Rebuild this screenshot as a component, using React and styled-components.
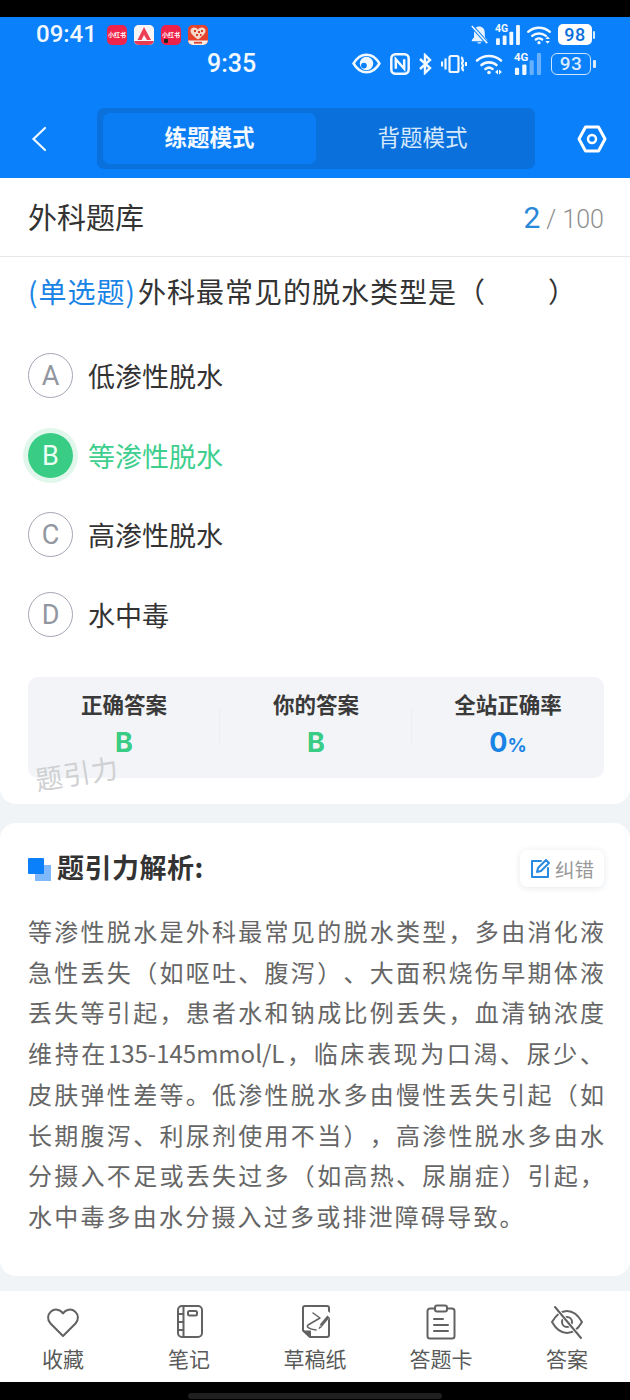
import React from 'react';
import styled, { createGlobalStyle } from 'styled-components';

const CJK = '"Noto Sans CJK SC", "Noto Sans", sans-serif';

const GlobalStyle = createGlobalStyle`
    html, body { margin: 0; padding: 0; background: #000; }
    * { box-sizing: border-box; }
    body { font-family: ${CJK}; text-spacing-trim: space-all; }
`;

const Page = styled.div`
    width: 630px;
    height: 1400px;
    background: #f1f4f7;
    display: flex;
    flex-direction: column;
    overflow: hidden;
`;

const TopBlack = styled.div`
    height: 17px;
    background: #000;
    flex: none;
`;

const Header = styled.header`
    height: 161px;
    background: #0a80fa;
    flex: none;
    padding-top: 3px;
    color: #fff;
`;

const StatusRow = styled.div`
    height: 29px;
    display: flex;
    align-items: center;
    padding-left: ${p => p.$left}px;
    padding-right: ${p => p.$right}px;
`;

const Clock = styled.span`
    font-family: "Roboto", sans-serif;
    font-size: ${p => p.$size}px;
    font-weight: 500;
    color: #f2f8ff;
    line-height: 29px;
`;

const Tiles = styled.div`
    display: flex;
    gap: 7px;
    margin-left: 10px;
`;

const Tile = styled.div`
    width: 20px;
    height: 20px;
    border-radius: 5px;
    background: ${p => p.$bg};
    color: #fff;
    font-size: 6px;
    line-height: 20px;
    text-align: center;
    font-weight: 700;
    overflow: hidden;
    position: relative;
`;

const TileDot = styled.span`
    position: absolute;
    left: 3px;
    bottom: 2px;
    width: 4px;
    height: 4px;
    border-radius: 1px;
    background: #222;
`;

const StatusIcons = styled.div`
    margin-left: auto;
    display: flex;
    align-items: center;
    gap: ${p => p.$gap}px;
`;

const PillBattery = styled.div`
    width: 34px;
    height: 21px;
    border-radius: 5px;
    background: #fff;
    color: #0a6fdc;
    font: 500 18px/21px "Roboto", sans-serif;
    text-align: center;
    letter-spacing: 0.5px;
`;

const OutlineBattery = styled.div`
    width: 40px;
    height: 22px;
    border-radius: 6px;
    border: 1.5px solid #cfe4fd;
    color: #dcecff;
    font: 500 19px/19px "Roboto", sans-serif;
    text-align: center;
    letter-spacing: 0.5px;
`;

const BatteryCap = styled.div`
    width: ${p => p.$w}px;
    height: 8px;
    margin-left: ${p => p.$gap}px;
    border-radius: 1px;
    background: #dcecff;
`;

const Battery = styled.div`
    display: flex;
    align-items: center;
`;

const Nav = styled.nav`
    display: flex;
    align-items: center;
    margin-top: 30px;
    padding: 0 22px 0 31px;
`;

const BackIcon = styled.svg`
    width: 16px;
    height: 26px;
    flex: none;
`;

const Segment = styled.div`
    width: 438px;
    height: 61px;
    margin: 0 42px 0 50px;
    padding: 5px 6px;
    border-radius: 7px;
    background: #0a71dc;
    display: flex;
    flex: none;
`;

const SegmentItem = styled.div`
    flex: 1;
    border-radius: 7px;
    background: ${p => (p.$active ? '#0a7df4' : 'transparent')};
    color: ${p => (p.$active ? '#f4f9ff' : '#d5e8fd')};
    font-size: 22.5px;
    font-weight: ${p => (p.$active ? 700 : 400)};
    padding-bottom: 6px;
    display: flex;
    align-items: center;
    justify-content: center;
`;

const QuestionCard = styled.section`
    height: 626px;
    flex: none;
    background: #fff;
    border-radius: 0 0 16px 16px;
    position: relative;
`;

const TitleRow = styled.div`
    height: 79px;
    border-bottom: 1px solid #e6e8eb;
    padding: 0 26px 0 28px;
    display: flex;
    align-items: center;
    justify-content: space-between;
`;

const BankName = styled.div`
    font-size: 29px;
    color: #333;
    padding-bottom: 2px;
`;

const Progress = styled.div`
    font-family: "Roboto", sans-serif;
    font-size: 25px;
    font-weight: 300;
    color: #8f8f8f;
    display: flex;
    align-items: baseline;
    gap: 6px;
`;

const ProgressNow = styled.span`
    font-size: 30px;
    font-weight: 400;
    color: #2a88d8;
`;

const Question = styled.div`
    padding: 14px 28px 0;
    font-size: 28px;
    letter-spacing: 1px;
    line-height: 40px;
    color: #333;
    white-space: nowrap;
`;

const QuestionType = styled.span`
    color: #1a84e6;
    margin-right: 2px;
`;

const Blank = styled.span`
    display: inline-block;
    width: 62px;
`;

const Options = styled.div`
    margin-top: 25px;
    padding: 0 28px;
    display: flex;
    flex-direction: column;
`;

const OptionRow = styled.div`
    height: 79.5px;
    display: flex;
    align-items: center;
    gap: 15px;
    font-size: 27px;
    color: ${p => (p.$on ? '#3ecf8e' : '#333')};
`;

const OptionMark = styled.div`
    width: 45px;
    height: 45px;
    flex: none;
    border-radius: 50%;
    font: 400 27px/45px "Roboto", sans-serif;
    text-align: center;
    border: ${p => (p.$on ? 'none' : '1.5px solid #a3a7b6')};
    color: ${p => (p.$on ? '#eafff4' : '#92969f')};
    background: ${p => (p.$on ? '#39cc85' : 'transparent')};
    box-shadow: ${p => (p.$on ? '0 0 0 5px #e2f7ec' : 'none')};
    line-height: ${p => (p.$on ? '47px' : '44px')};
`;

const Stats = styled.div`
    margin: 23px 26px 0 28px;
    height: 101px;
    border-radius: 10px;
    background: #f2f4f7;
    display: flex;
    padding-top: 12px;
`;

const Stat = styled.div`
    flex: 1;
    display: flex;
    flex-direction: column;
    align-items: center;
    position: relative;

    &::before {
        content: ${p => (p.$first ? 'none' : '""')};
        position: absolute;
        left: -1px;
        top: 19px;
        height: 36px;
        width: 1px;
        background: #ebedf0;
    }
`;

const StatLabel = styled.div`
    font-size: 21.5px;
    line-height: 30px;
    font-weight: 700;
    color: #3a3a3a;
`;

const StatValue = styled.div`
    margin-top: 10px;
    font: 700 27px/28px "Inter", "Roboto", sans-serif;
    color: ${p => p.$color};
`;

const Percent = styled.span`
    font-size: 19px;
`;

const Watermark = styled.div`
    position: absolute;
    left: 35px;
    top: 578px;
    font-size: 27px;
    line-height: 34px;
    color: #cfd0d2;
    letter-spacing: 1px;
    transform: rotate(-9deg);
`;

const Analysis = styled.section`
    margin-top: 19px;
    height: 453px;
    flex: none;
    background: #fff;
    border-radius: 16px;
    padding: 25px 26px 0 28px;
`;

const AnalysisHead = styled.div`
    height: 40px;
    display: flex;
    align-items: center;
    justify-content: space-between;
`;

const AnalysisTitle = styled.div`
    display: flex;
    align-items: center;
    gap: 6px;
    font-size: 27px;
    letter-spacing: 0.5px;
    font-weight: 700;
    color: #333;
    padding-bottom: 4px;
`;

const TitleMark = styled.svg`
    width: 23px;
    height: 23px;
    margin-top: 6px;
`;

const FixButton = styled.div`
    width: 84px;
    height: 37px;
    border-radius: 7px;
    background: #fff;
    box-shadow: 0 1px 6px rgba(30, 60, 100, 0.12);
    display: flex;
    align-items: center;
    justify-content: center;
    gap: 4px;
    font-size: 19.5px;
    color: #999;
`;

const AnalysisBody = styled.div`
    margin-top: 23px;
    font-size: 24px;
    line-height: 40.7px;
    color: #666;
`;

const AnalysisLine = styled.div`
    white-space: nowrap;
    text-align: justify;
    text-align-last: ${p => (p.$last ? 'left' : 'justify')};
    letter-spacing: ${p => (p.$last ? '2.2px' : '0')};
`;

const BottomBar = styled.footer`
    margin-top: 15px;
    height: 91px;
    flex: none;
    background: #fff;
    display: flex;
`;

const BarItem = styled.div`
    flex: 1;
    display: flex;
    flex-direction: column;
    align-items: center;
    padding-top: 13px;
    font-size: 21px;
    line-height: 30px;
    color: #5a5a5a;
`;

const BarIcon = styled.svg`
    width: 36px;
    height: 36px;
    margin-bottom: 3px;
    fill: none;
    stroke: #626262;
    stroke-width: 2;
    stroke-linecap: round;
    stroke-linejoin: round;
`;

const HomeArea = styled.div`
    flex: 1;
    background: #000;
    display: flex;
    justify-content: center;
    align-items: flex-end;
    padding-bottom: 1px;
`;

const HomePill = styled.div`
    width: 254px;
    height: 6px;
    border-radius: 3px;
    background: #1f1f1f;
`;

const Bell = () => (
    <svg width="19" height="22" viewBox="0 0 21 22" fill="#e9f3ff">
        <path d="M10 1.500c3.800 0 6.300 2.800 6.300 6.500l.2 5.500 2.500 3v1.500H2v-1.500l2.500-3V8c0-3.700 1.800-6.500 5.500-6.500z" />
        <path d="M8 19h4.500c-.3 2-4.200 2-4.500 0z" />
        <path d="M2 1l17 19" stroke="#0a80fa" strokeWidth="4" />
        <path d="M2 1l17 19" stroke="#e9f3ff" strokeWidth="1.800" />
    </svg>
);

const Signal = ({ w, h, on, faded }) => (
    <svg width={w} height={h} viewBox="0 0 26 22" fill="#f2f8ff" overflow="visible">
        <text x="0" y="8.500" fontSize="11" fontWeight="700" fontFamily="Roboto, sans-serif">4G</text>
        <rect x="1" y="15" width="4" height="7" rx="1" />
        <rect x="8" y="12" width="4" height="10" rx="1" />
        <rect x="15" y="8" width="4" height="14" rx="1" fillOpacity={on < 3 ? 0.4 : 1} />
        <rect x="22" y="1" width="4" height="21" rx="1" fillOpacity={faded ? 0.4 : 1} />
    </svg>
);

const Wifi = ({ w, h, arrows }) => (
    <svg width={w} height={h} viewBox="0 0 28 22" fill="none" stroke="#f2f8ff" strokeWidth="2.600" strokeLinecap="round">
        <path d="M2 7.500C9 1.500 19 1.500 26 7.500" />
        <path d="M6.500 12C10.500 8.500 17.500 8.500 21.500 12" />
        <path d="M10.500 16c2-1.500 5-1.500 7 0" />
        <circle cx="14" cy="19.500" r="1.800" fill="#f2f8ff" stroke="none" />
        {arrows === 'v' && <path d="M21 15.500l2.500-3 2.500 3zM21 17.500h5l-2.500 3z" fill="#f2f8ff" stroke="none" />}
        {arrows === 'h' && <path d="M20 19l3-2.500v5zM27 19l-3-2.500v5z" fill="#f2f8ff" stroke="none" />}
    </svg>
);

const Eye = () => (
    <svg width="29" height="21" viewBox="0 0 28 20">
        <path d="M1.500 10C5 4 9 1.500 14 1.500S23 4 26.500 10C23 16 19 18.500 14 18.500S5 16 1.500 10z" fill="none" stroke="#f2f8ff" strokeWidth="2.400" />
        <circle cx="14" cy="10" r="6.500" fill="#f2f8ff" />
        <circle cx="11.500" cy="12" r="2.800" fill="#0a80fa" />
    </svg>
);

const Nfc = () => (
    <svg width="20" height="22" viewBox="0 0 19 21" fill="none" stroke="#f2f8ff" strokeWidth="2.400">
        <rect x="1.200" y="1.200" width="16.600" height="18.600" rx="4" />
        <path d="M5.500 15V6l8 9V6" />
    </svg>
);

const Bluetooth = () => (
    <svg width="14" height="22" viewBox="0 0 14 22" fill="none" stroke="#f2f8ff" strokeWidth="2.400">
        <path d="M2 6l10 9-5 5V2l5 5L2 16" />
    </svg>
);

const Vibrate = () => (
    <svg width="26" height="20" viewBox="0 0 26 20" fill="none" stroke="#f2f8ff" strokeWidth="2.200">
        <rect x="8.500" y="2" width="9" height="16" rx="1.500" />
        <path d="M4.500 4.500v11M1 7.500v5M21.500 3c-1.500 2 1.500 3 0 5s1.500 3 0 5 1.500 2 0 4M25 8v4" />
    </svg>
);

const Chevron = () => (
    <BackIcon viewBox="0 0 16 26" fill="none" stroke="#f2f8ff" strokeWidth="2.200" strokeLinecap="round">
        <path d="M14 2L2.500 13 14 24" />
    </BackIcon>
);

const Hex = () => (
    <svg width="30" height="28" viewBox="0 0 30 28" fill="none" stroke="#fff" strokeWidth="3" strokeLinejoin="round" style={{ flex: 'none' }}>
        <path d="M8.500 2h13L28 14l-6.500 12h-13L2 14z" />
        <circle cx="15" cy="14" r="4" strokeWidth="2.500" />
    </svg>
);

const Pencil = () => (
    <svg width="21" height="21" viewBox="0 0 21 21" fill="none" stroke="#2a8ae0" strokeWidth="2" strokeLinecap="round" strokeLinejoin="round">
        <path d="M11 3H2v16h16v-9" />
        <path d="M8 10l8-8 3 3-8 8-4 1z" />
    </svg>
);

const LogoA = () => (
    <svg width="20" height="20" viewBox="0 0 20 20">
        <rect width="20" height="20" fill="#f7f4f5" />
        <path d="M10 2L3.500 15h4L10 10l3 5h4z" fill="#ee3f55" />
        <rect y="16" width="20" height="4" fill="#e83a52" />
    </svg>
);

const LogoHeart = () => (
    <svg width="20" height="20" viewBox="0 0 20 20">
        <rect width="20" height="20" fill="#e6432e" />
        <path d="M10 14.500C5 11 2.500 8.500 2.500 5.800 2.500 3.800 4 2.500 6 2.500c1.700 0 3.200.8 4 2.200.8-1.400 2.300-2.200 4-2.200 2 0 3.500 1.300 3.500 3.300 0 2.700-2.500 5.200-7.500 8.700z" fill="#f8d8c8" />
        <path d="M6 5h2v2H6zM10 6h2v2h-2zM13 5h2v2h-2zM8 9h2v2H8zM12 9h1.500v2H12z" fill="#d9402c" />
        <rect y="15.500" width="20" height="4.500" fill="#f6ece6" />
        <rect x="6" y="16.800" width="8" height="1.800" fill="#d9402c" />
    </svg>
);

const stats = [
    { label: '正确答案', value: 'B', color: '#39cc85' },
    { label: '你的答案', value: 'B', color: '#39cc85' },
    { label: '全站正确率', value: '0', color: '#1a84e6', percent: true },
];

const options = [
    { mark: 'A', text: '低渗性脱水' },
    { mark: 'B', text: '等渗性脱水', on: true },
    { mark: 'C', text: '高渗性脱水' },
    { mark: 'D', text: '水中毒' },
];

const analysis = [
    '等渗性脱水是外科最常见的脱水类型，多由消化液',
    '急性丢失（如呕吐、腹泻）、大面积烧伤早期体液',
    '丢失等引起，患者水和钠成比例丢失，血清钠浓度',
    '维持在135-145mmol/L，临床表现为口渴、尿少、',
    '皮肤弹性差等。低渗性脱水多由慢性丢失引起（如',
    '长期腹泻、利尿剂使用不当），高渗性脱水多由水',
    '分摄入不足或丢失过多（如高热、尿崩症）引起，',
    '水中毒多由水分摄入过多或排泄障碍导致。',
];

const bar = [
    { label: '收藏', icon: <path d="M18 32L5.500 19.500C2 16 2.500 10.500 6 7.500 9.500 4.500 15 5 18 9.500 21 5 26.500 4.500 30 7.500 33.500 10.500 34 16 30.500 19.500z" /> },
    { label: '笔记', icon: <><rect x="7" y="2" width="24" height="31" rx="4" /><path d="M12.500 2v31M7 10h5.500M7 18h5.500M7 26h5.500" /><rect x="17" y="7" width="9" height="4.500" rx="1.500" /></> },
    { label: '草稿纸', icon: <><path d="M13 33h17a2 2 0 0 0 2-2V4a2 2 0 0 0-2-2H8a2 2 0 0 0-2 2v22.500z" /><path d="M7.500 27.500h5.500v5z" fill="#626262" /><path d="M16 9l7 5-12 7c-2 2 1 4 8 5" strokeWidth="1.500" /><path d="M33 9l-8 9" stroke="#fff" strokeWidth="6" strokeLinecap="butt" /><path d="M31.500 12.500L24 21.500" strokeWidth="3" strokeLinecap="butt" /><path d="M23.500 22l-1.500 2.500 2.500-1.500z" strokeWidth="1" /></> },
    { label: '答题卡', icon: <><path d="M12 4.500H7a2.500 2.500 0 0 0-2.500 2.500v25A2.500 2.500 0 0 0 7 34.500h22a2.500 2.500 0 0 0 2.500-2.500V7A2.500 2.500 0 0 0 29 4.500h-5" /><rect x="12" y="1.500" width="12" height="6" rx="2" /><path d="M11 15h9M11 21h14M11 27h14" /></> },
    { label: '答案', icon: <><path d="M3 18c4-7 9-11 15-11s11 4 15 11c-4 7-9 11-15 11S7 25 3 18z" /><circle cx="18" cy="18" r="5" /><path d="M6 3l26 31" stroke="#fff" strokeWidth="4" /><path d="M6 3l26 31" /></> },
];

export default function App() {
    return (
        <Page>
            <GlobalStyle />
            <TopBlack />
            <Header>
                <StatusRow $left={36} $right={35}>
                    <Clock $size={24}>09:41</Clock>
                    <Tiles>
                        <Tile $bg="#f0244a">小红书</Tile>
                        <Tile $bg="#f7f4f5"><LogoA /></Tile>
                        <Tile $bg="#ee2148">小红书<TileDot /></Tile>
                        <Tile $bg="#e6432e"><LogoHeart /></Tile>
                    </Tiles>
                    <StatusIcons $gap={6}>
                        <Bell />
                        <Signal w={25} h={21} on={4} />
                        <Wifi w={26} h={20} arrows="v" />
                        <Battery>
                            <PillBattery>98</PillBattery>
                            <BatteryCap $w={2} $gap={1} />
                        </Battery>
                    </StatusIcons>
                </StatusRow>
                <StatusRow $left={207} $right={34}>
                    <Clock $size={25}>9:35</Clock>
                    <StatusIcons $gap={8.5}>
                        <Eye />
                        <Nfc />
                        <Bluetooth />
                        <Vibrate />
                        <Wifi w={28} h={22} arrows="h" />
                        <Signal w={31} h={23} on={2} faded />
                        <Battery>
                            <OutlineBattery>93</OutlineBattery>
                            <BatteryCap $w={3} $gap={2} />
                        </Battery>
                    </StatusIcons>
                </StatusRow>
                <Nav>
                    <Chevron />
                    <Segment>
                        <SegmentItem $active>练题模式</SegmentItem>
                        <SegmentItem>背题模式</SegmentItem>
                    </Segment>
                    <Hex />
                </Nav>
            </Header>

            <QuestionCard>
                <TitleRow>
                    <BankName>外科题库</BankName>
                    <Progress><ProgressNow>2</ProgressNow>/ 100</Progress>
                </TitleRow>
                <Question><QuestionType>(单选题)</QuestionType>外科最常见的脱水类型是（<Blank />）</Question>
                <Options>
                    {options.map(o => (
                        <OptionRow key={o.mark} $on={o.on}>
                            <OptionMark $on={o.on}>{o.mark}</OptionMark>
                            {o.text}
                        </OptionRow>
                    ))}
                </Options>
                <Stats>
                    {stats.map((s, i) => (
                        <Stat key={s.label} $first={i === 0}>
                            <StatLabel>{s.label}</StatLabel>
                            <StatValue $color={s.color}>{s.value}{s.percent && <Percent>%</Percent>}</StatValue>
                        </Stat>
                    ))}
                </Stats>
                <Watermark>题引力</Watermark>
            </QuestionCard>

            <Analysis>
                <AnalysisHead>
                    <AnalysisTitle>
                        <TitleMark viewBox="0 0 23 23">
                            <rect x="7" y="7" width="16" height="16" fill="#7fb9fb" />
                            <rect x="0" y="0" width="16" height="16" rx="1" fill="#0a80fa" />
                        </TitleMark>
                        题引力解析:
                    </AnalysisTitle>
                    <FixButton><Pencil />纠错</FixButton>
                </AnalysisHead>
                <AnalysisBody>
                    {analysis.map((line, i) => (
                        <AnalysisLine key={i} $last={i === analysis.length - 1}>{line}</AnalysisLine>
                    ))}
                </AnalysisBody>
            </Analysis>

            <BottomBar>
                {bar.map(b => (
                    <BarItem key={b.label}>
                        <BarIcon viewBox="0 0 36 36">{b.icon}</BarIcon>
                        {b.label}
                    </BarItem>
                ))}
            </BottomBar>
            <HomeArea><HomePill /></HomeArea>
        </Page>
    );
}
